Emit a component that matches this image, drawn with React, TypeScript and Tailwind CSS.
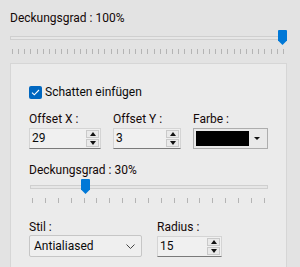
import React from "react";

const font = { fontFamily: 'Roboto, "Noto Sans", sans-serif' };

function Thumb() {
  return (
    <svg width="9" height="15" viewBox="0 0 9 15" className="block">
      <path d="M0 1 Q0 0 1 0 H8 Q9 0 9 1 V10.5 L4.5 15 L0 10.5 Z" fill="#0078d7" />
    </svg>
  );
}

function Slider({ ticks, thumbLeft }: { ticks: number; thumbLeft: number }) {
  return (
    <div className="relative h-[26px]">
      <div className="absolute left-0 right-0 top-[6px] h-[4px] bg-[#e6e6e6] border border-[#cfcfcf]" />
      <div className="absolute top-0" style={{ left: thumbLeft }}>
        <Thumb />
      </div>
      <div className="absolute left-[2px] right-[3px] top-[19px] flex justify-between">
        {Array.from({ length: ticks }).map((_, i) => (
          <div key={i} className="w-px h-[5px] bg-[#b4b4b4]" />
        ))}
      </div>
    </div>
  );
}

function Spinner() {
  return (
    <div className="flex flex-col gap-px py-px pr-px">
      <div className="w-[13px] h-[9px] bg-[#e9e9e9] border border-[#c9c9c9] flex items-center justify-center">
        <svg width="6" height="4" viewBox="0 0 6 4"><path d="M0 4 L3 0 L6 4 Z" fill="#111" /></svg>
      </div>
      <div className="w-[13px] h-[9px] bg-[#e9e9e9] border border-[#c9c9c9] flex items-center justify-center">
        <svg width="6" height="4" viewBox="0 0 6 4"><path d="M0 0 L6 0 L3 4 Z" fill="#111" /></svg>
      </div>
    </div>
  );
}

function NumInput({ value, width }: { value: string; width: number }) {
  return (
    <div
      className="h-[21px] flex items-stretch justify-between bg-[#f0f0f0] border border-[#d4d4d4] border-b-[#7a7a7a]"
      style={{ width }}
    >
      <span className="pl-[2px] text-[12px] leading-[19px] text-[#0a0a0a]">{value}</span>
      <Spinner />
    </div>
  );
}

function Label({ children, lh = "leading-[17px]" }: { children: React.ReactNode; lh?: string }) {
  return <div className={`text-[12px] ${lh} text-[#140808]`}>{children}</div>;
}

export default function App() {
  return (
    <div className="w-[300px] h-[267px] overflow-hidden bg-[#e3e3e3] pl-[10px] pr-[13px] pt-[10px]" style={font}>
      <Label>Deckungsgrad : 100%</Label>
      <div className="mt-[3px]">
        <Slider ticks={45} thumbLeft={268} />
      </div>
      <div className="mt-[7px] h-[240px] bg-[#ebebeb] border border-[#d6d6d6] pl-[18px] pr-[18px] pt-[20px]">
        <div className="flex items-center gap-[3px] h-[16px]">
          <div className="w-[13px] h-[13px] rounded-[2px] bg-[#0067c0] flex items-center justify-center">
            <svg width="9" height="7" viewBox="0 0 9 7">
              <path d="M1 3.6 L3.3 5.8 L8 1" stroke="#fff" strokeWidth="1.1" fill="none" />
            </svg>
          </div>
          <span className="text-[12px] leading-[16px] text-[#0a0a0a]">Schatten einfügen</span>
        </div>
        <div className="mt-[11px] flex gap-[12px]">
          <div className="w-[72px]">
            <Label>Offset X :</Label>
            <NumInput value="29" width={72} />
          </div>
          <div className="w-[68px]">
            <Label>Offset Y :</Label>
            <NumInput value="3" width={68} />
          </div>
          <div className="w-[75px]">
            <Label>Farbe :</Label>
            <div className="h-[21px] w-[75px] bg-[#e9e9e9] border border-[#adadad] flex items-stretch p-[2px]">
              <div className="flex-1 bg-black" />
              <div className="w-[16px] flex items-center justify-center">
                <svg width="6" height="3" viewBox="0 0 6 3"><path d="M0 0 L6 0 L3 3 Z" fill="#111" /></svg>
              </div>
            </div>
          </div>
        </div>
        <div className="mt-[13px]">
          <Label>Deckungsgrad : 30%</Label>
          <div className="pl-[1px]">
            <Slider ticks={19} thumbLeft={51} />
          </div>
        </div>
        <div className="mt-[14px] flex gap-[15px]">
          <div className="w-[113px]">
            <Label lh="leading-[16px]">Stil :</Label>
            <div className="h-[22px] w-[113px] bg-[#efefef] border border-[#c6c6c6] rounded-[2px] flex items-center justify-between pl-[4px] pr-[6px]">
              <span className="text-[12px] text-[#0a0a0a]">Antialiased</span>
              <svg width="9" height="5" viewBox="0 0 9 5"><path d="M0.5 0.5 L4.5 4.5 L8.5 0.5" stroke="#444" strokeWidth="1" fill="none" /></svg>
            </div>
          </div>
          <div className="w-[65px]">
            <Label lh="leading-[16px]">Radius :</Label>
            <div className="mt-[1px]"><NumInput value="15" width={65} /></div>
          </div>
        </div>
      </div>
    </div>
  );
}
